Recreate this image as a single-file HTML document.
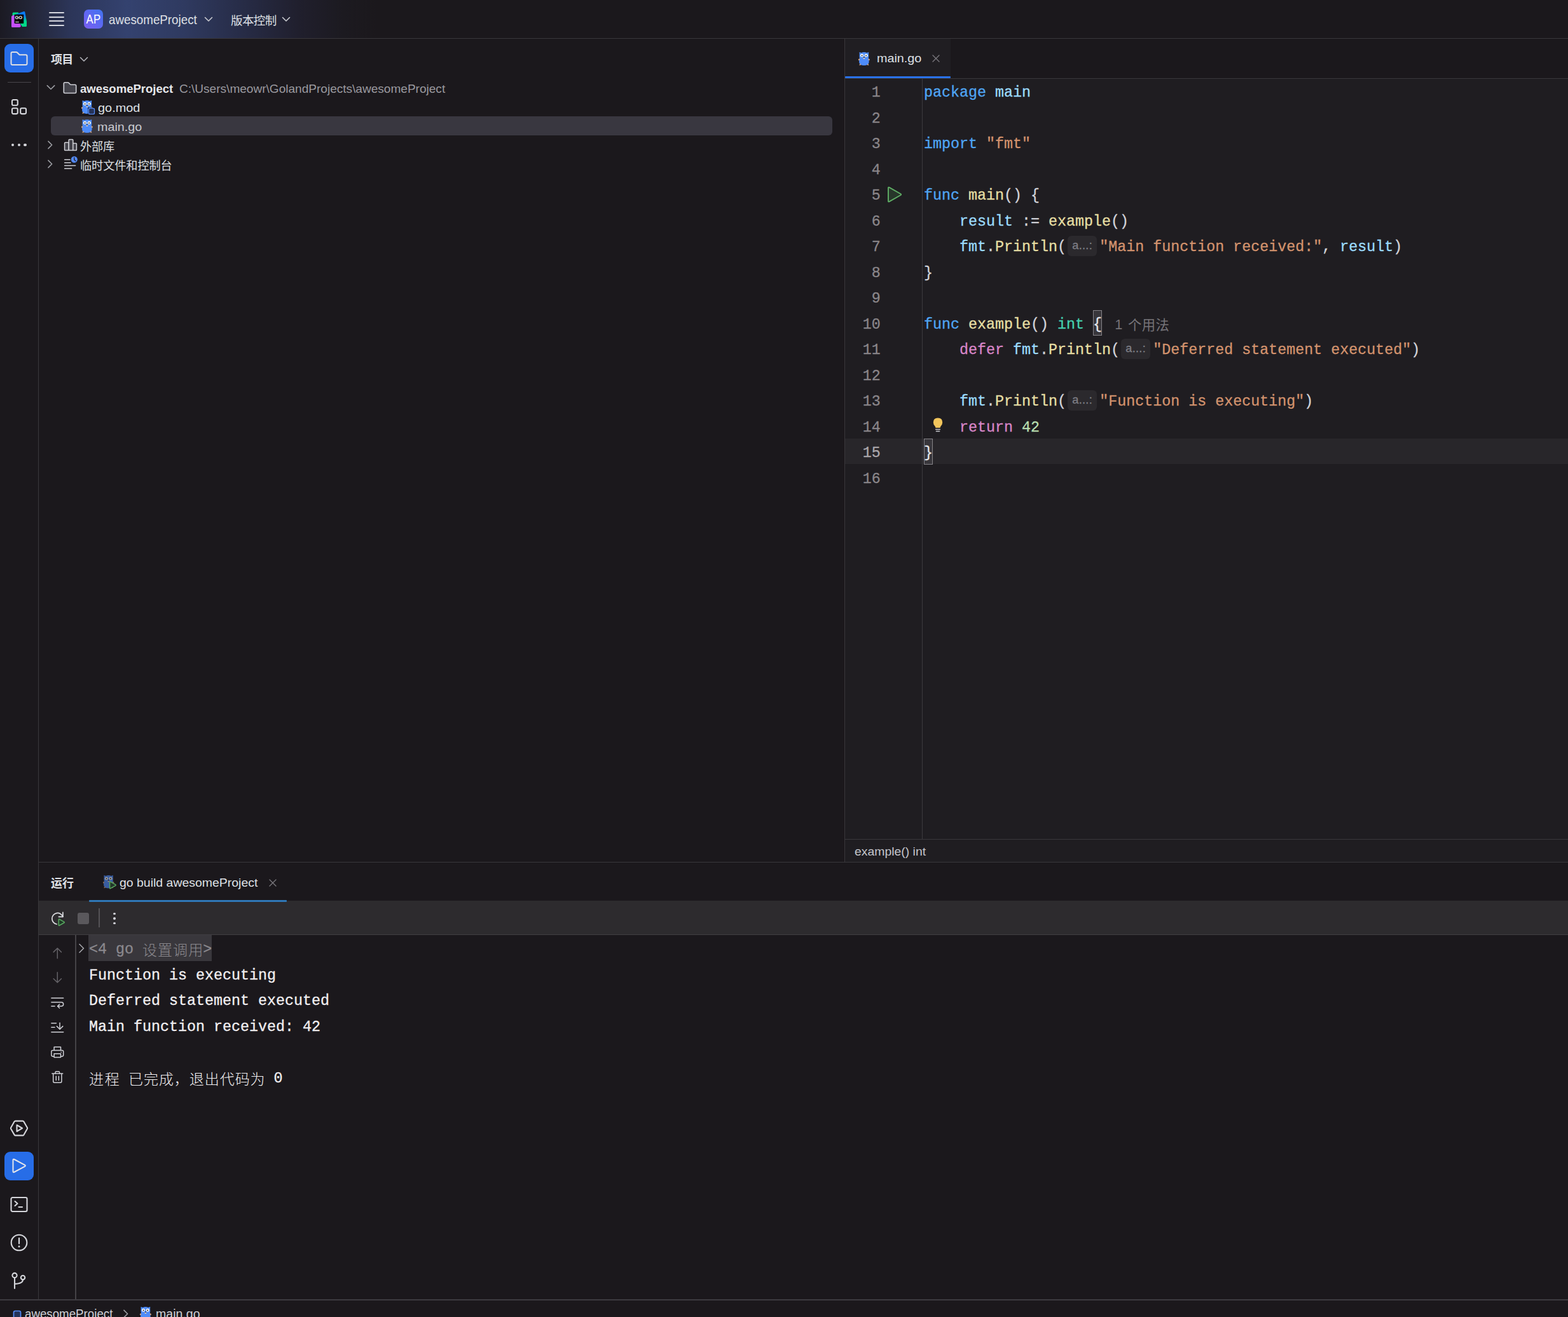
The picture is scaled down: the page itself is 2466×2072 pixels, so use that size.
<!DOCTYPE html>
<html lang="zh-CN"><head><meta charset="utf-8"><title>awesomeProject – main.go</title>
<style>
html,body{margin:0;padding:0;}
body{width:2466px;height:2072px;overflow:hidden;background:#1b181c;position:relative;font-family:"Liberation Sans",sans-serif;}
.b,.a,.t,.cj{position:absolute;}
.t{white-space:pre;font-family:"Liberation Sans",sans-serif;}
.m{-webkit-text-stroke:.3px currentColor;font-family:"Liberation Mono",monospace;font-size:23.33px;line-height:40.5px;height:40.5px;}
.cj{overflow:visible;}
.cj text{font-family:"Liberation Sans","Noto Sans CJK SC",sans-serif;}
.ln{left:1340.7px;width:44px;text-align:right;padding-top:3.1px;letter-spacing:0}
.cl{left:1453px;padding-top:3.1px;color:#d3d4da}
.co{left:140px;padding-top:3.3px;}
.h{display:inline-block;width:52.3px;height:40.5px;vertical-align:top;position:relative;}
.h i{position:absolute;left:2.4px;top:1.5px;width:45.5px;height:32.5px;border-radius:6px;background:#2b292d;color:#7d7e85;font:normal 18.2px/31px "Liberation Sans",sans-serif;text-align:center;letter-spacing:.3px}
.br{background:#38363b;box-shadow:inset 0 0 0 1px #858388;display:inline-block;height:40.5px;margin-top:-3.1px;padding-top:3.1px;box-sizing:border-box;vertical-align:top;color:#e6e6ea}
</style></head>
<body>
<div class="b" style="left:0;top:0;width:2466px;height:60px;background:linear-gradient(90deg,#1b1a23 0px,#232638 50px,#2c3558 110px,#34426f 200px,#2f3a60 290px,#272c47 380px,#201f2d 470px,#1c1a20 540px,#1b181c 595px)"></div>
<div class="b" style="left:0px;top:60px;width:2466px;height:1px;background:#39373b;"></div>
<svg class="a" style="left:17px;top:17px" width="26" height="26" viewBox="0 0 26 26">
<defs><linearGradient id="lg1" x1="0" y1="1" x2="1" y2="0"><stop offset="0" stop-color="#c24dff"/><stop offset=".55" stop-color="#c24dff"/><stop offset="1" stop-color="#7a5cff"/></linearGradient>
<linearGradient id="lg2" x1="0.2" y1="0" x2="0.6" y2="1"><stop offset="0" stop-color="#0a7cfa"/><stop offset=".45" stop-color="#0a7cfa"/><stop offset=".8" stop-color="#00d787"/><stop offset="1" stop-color="#00d787"/></linearGradient></defs>
<path d="M2.6 4.2 Q2.6 2.6 4.2 2.6 L12 2.6 L12 10 L2.6 12 Z" fill="#00d886"/>
<path d="M9 5 L20.5 1 Q22 .6 22.3 2.2 L25 17 L25 23.5 Q25 25 23.5 25 L18 25 L9 12 Z" fill="url(#lg2)"/>
<path d="M1 9.5 Q1 8.3 2 7.8 L8 5.5 L16 24 L15 25.3 Q14.5 26 13.5 26 L2.5 26 Q1 26 1 24.5 Z" fill="#c54fff"/>
<rect x="5.6" y="5.8" width="14.6" height="14.2" rx=".8" fill="#000"/>
<text x="6.6" y="13.2" font-family="Liberation Sans, sans-serif" font-weight="700" font-size="7.6" fill="#fff" letter-spacing="-.2">GO</text>
<rect x="7.2" y="17" width="5.6" height="1.3" fill="#c9c9c9"/>
</svg>
<div class="b" style="left:76.5px;top:19px;width:24px;height:2px;background:#d4d6de;border-radius:1px"></div>
<div class="b" style="left:76.5px;top:25.7px;width:24px;height:2px;background:#d4d6de;border-radius:1px"></div>
<div class="b" style="left:76.5px;top:32.4px;width:24px;height:2px;background:#d4d6de;border-radius:1px"></div>
<div class="b" style="left:76.5px;top:39.1px;width:24px;height:2px;background:#d4d6de;border-radius:1px"></div>
<div class="b" style="left:132px;top:15px;width:30px;height:30px;border-radius:7px;background:linear-gradient(45deg,#7a5ef2 0%,#5f68f2 50%,#4074f0 100%)"></div>
<span class="t" style="left:132px;top:15px;width:30px;text-align:center;font-size:19.5px;line-height:31px;color:#fff;transform:scaleX(.86);letter-spacing:.5px">AP</span>
<span id="f0" class="t" style="top:16.84px;font-size:19.8px;line-height:28px;color:#dfe0e5;left:171.02px;transform:scaleX(0.9487);transform-origin:0 0;">awesomeProject</span>
<svg class="a" style="left:321px;top:25px" width="14" height="11" viewBox="0 0 14 11"><path d="M1.5 2.5 L7 8 L12.5 2.5" fill="none" stroke="#c9cad0" stroke-width="1.6" stroke-linecap="round" stroke-linejoin="round"/></svg>
<svg class="cj" aria-label="版本控制" style="left:362.5px;top:19.50px;width:72.40px;height:24.18px;fill:#dfe0e5;" viewBox="0 -18.60 72.40 24.18"><text x="0" y="0" font-size="18.6" textLength="72.4" lengthAdjust="spacing">版本控制</text></svg>
<svg class="a" style="left:443px;top:25px" width="14" height="11" viewBox="0 0 14 11"><path d="M1.5 2.5 L7 8 L12.5 2.5" fill="none" stroke="#c9cad0" stroke-width="1.6" stroke-linecap="round" stroke-linejoin="round"/></svg>
<div class="b" style="left:60px;top:61px;width:1px;height:1984px;background:#39373b;"></div>
<div class="b" style="left:7px;top:68.8px;width:45.8px;height:45.2px;border-radius:9px;background:#276de7"></div>
<svg class="a" style="left:15px;top:79px" width="30" height="26" viewBox="0 0 30 26"><path d="M2.5 5 Q2.5 3 4.5 3 L10.5 3 Q11.5 3 12.2 3.7 L15.2 6.7 Q15.8 7.3 16.8 7.3 L25.5 7.3 Q27.5 7.3 27.5 9.3 L27.5 21 Q27.5 23 25.5 23 L4.5 23 Q2.5 23 2.5 21 Z" fill="none" stroke="#dddee3" stroke-width="2" stroke-linejoin="round"/></svg>
<div class="b" style="left:12px;top:129px;width:37px;height:1px;background:#48464b;"></div>
<svg class="a" style="left:17px;top:155px" width="26" height="26" viewBox="0 0 26 26"><g fill="none" stroke="#d5d6db" stroke-width="2.1"><rect x="2" y="2" width="8.8" height="8.8" rx="2"/><rect x="2" y="15.3" width="8.8" height="8.8" rx="2"/><rect x="15.2" y="15.3" width="8.8" height="8.8" rx="2"/></g></svg>
<div class="b" style="left:18.0px;top:225.8px;width:4.4px;height:4.4px;border-radius:50%;background:#d5d6db"></div>
<div class="b" style="left:27.7px;top:225.8px;width:4.4px;height:4.4px;border-radius:50%;background:#d5d6db"></div>
<div class="b" style="left:37.4px;top:225.8px;width:4.4px;height:4.4px;border-radius:50%;background:#d5d6db"></div>
<svg class="a" style="left:15px;top:1760px" width="30" height="30" viewBox="0 0 30 30"><g fill="none" stroke="#d5d6db" stroke-width="2.1" stroke-linejoin="round"><path d="M9.3 3.6 L20.7 3.6 Q21.8 3.6 22.4 4.6 L27.8 14 Q28.3 15 27.8 16 L22.4 25.4 Q21.8 26.4 20.7 26.4 L9.3 26.4 Q8.2 26.4 7.6 25.4 L2.2 16 Q1.7 15 2.2 14 L7.6 4.6 Q8.2 3.6 9.3 3.6 Z"/><path d="M11.5 10 L20 15 L11.5 20 Z"/></g></svg>
<div class="b" style="left:7px;top:1812px;width:45.8px;height:45px;border-radius:9px;background:#276de7"></div>
<svg class="a" style="left:15px;top:1819px" width="30" height="30" viewBox="0 0 30 30"><path d="M5.5 6.2 Q5.5 4 7.4 5 L24 13.8 Q25.8 15 24 16.2 L7.4 25 Q5.5 26 5.5 23.8 Z" fill="none" stroke="#e4e5ea" stroke-width="2" stroke-linejoin="round"/></svg>
<svg class="a" style="left:15px;top:1880px" width="30" height="30" viewBox="0 0 30 30"><g fill="none" stroke="#d5d6db" stroke-width="2.1" stroke-linecap="round" stroke-linejoin="round"><rect x="2.5" y="4" width="25" height="22" rx="2.2"/><path d="M8.5 10 L12.5 13.5 L8.5 17"/><path d="M14.5 19 L20 19"/></g></svg>
<svg class="a" style="left:15px;top:1940px" width="30" height="30" viewBox="0 0 30 30"><circle cx="15" cy="15" r="12.3" fill="none" stroke="#d5d6db" stroke-width="2.1"/><path d="M15 8 L15 16.5" stroke="#d5d6db" stroke-width="2.2" stroke-linecap="round"/><circle cx="15" cy="21" r="1.5" fill="#d5d6db"/></svg>
<svg class="a" style="left:15px;top:2000px" width="30" height="30" viewBox="0 0 30 30"><g fill="none" stroke="#d5d6db" stroke-width="2.1" stroke-linecap="round"><circle cx="8" cy="6.5" r="3.6"/><circle cx="21" cy="10" r="3.2"/><path d="M8 10.2 L8 27"/><path d="M21 13.3 Q21 19.5 8 20"/></g></svg>
<svg class="cj" aria-label="项目" style="left:80px;top:82.30px;width:35.20px;height:23.40px;fill:#dfe0e5;" viewBox="0 -18.00 35.20 23.40"><text x="0" y="0" font-size="18" font-weight="700" textLength="35.2" lengthAdjust="spacing">项目</text></svg>
<svg class="a" style="left:125px;top:88px" width="14" height="11" viewBox="0 0 14 11"><path d="M1.5 2.5 L7 8 L12.5 2.5" fill="none" stroke="#b4b5bb" stroke-width="1.5" stroke-linecap="round" stroke-linejoin="round"/></svg>
<svg class="a" style="left:71.5px;top:131.5px" width="16" height="12" viewBox="0 0 16 12"><path d="M2.3 2.6 L8 8.2 L13.7 2.6" fill="none" stroke="#9d9ea4" stroke-width="1.6" stroke-linecap="round" stroke-linejoin="round"/></svg>
<svg class="a" style="left:98px;top:127px" width="24" height="22" viewBox="0 0 24 22"><path d="M2.3 4.5 Q2.3 2.8 4 2.8 L8.6 2.8 Q9.5 2.8 10.1 3.4 L12.4 5.7 Q13 6.3 13.9 6.3 L20 6.3 Q21.7 6.3 21.7 8 L21.7 17.8 Q21.7 19.5 20 19.5 L4 19.5 Q2.3 19.5 2.3 17.8 Z" fill="#43424a" stroke="#cfd0d6" stroke-width="1.6" stroke-linejoin="round"/></svg>
<span id="f1" class="t" style="top:127.16px;font-size:18.6px;line-height:26px;color:#e6e7ea;left:125.8px;font-weight:700;transform:scaleX(0.9966);transform-origin:0 0;">awesomeProject</span>
<span id="f2" class="t" style="top:127.16px;font-size:18.6px;line-height:26px;color:#9a999f;left:282.0px;transform:scaleX(1.0245);transform-origin:0 0;">C:\Users\meowr\GolandProjects\awesomeProject</span>
<svg class="a" style="left:127.2px;top:157.2px;opacity:1" width="19.95" height="22.80" viewBox="0 0 21 24">
<path d="M2.6 1 L5.9 2.1 Q10.4 -.2 14.9 2.1 L18.2 1 L18 4.7 Q18.5 8 17.8 11 Q19.4 16.4 17.9 20 Q16.2 23.2 10.4 23.2 Q4.6 23.2 2.9 20 Q1.4 16.4 3 11 Q2.3 8 2.8 4.7 Z" fill="#4e8cf9"/>
<circle cx="6.9" cy="6.6" r="2.65" fill="#fff"/><circle cx="13.9" cy="6.6" r="2.65" fill="#fff"/>
<circle cx="7" cy="6.8" r="1.1" fill="#1c2230"/><circle cx="13.8" cy="6.8" r="1.1" fill="#1c2230"/>
<ellipse cx="10.4" cy="11.2" rx="1.5" ry="1.1" fill="#efd3b6"/><ellipse cx="10.4" cy="9.7" rx="1.05" ry=".85" fill="#231c22"/>
<path d="M.9 12.6 L3.1 11.9 L3.2 14.3 L1.4 14.9 Z" fill="#d8a884"/><path d="M19.9 12.6 L17.7 11.9 L17.6 14.3 L19.4 14.9 Z" fill="#d8a884"/>
<path d="M3 21 L5.2 20.4 L4.8 22.6 L2.6 22.8 Z" fill="#d8a884"/><path d="M17.8 21 L15.6 20.4 L16 22.6 L18.2 22.8 Z" fill="#d8a884"/>
</svg>
<svg class="a" style="left:137.8px;top:168.8px" width="12" height="12" viewBox="0 0 14 14"><rect x="1.6" y="1.6" width="10.8" height="10.8" rx="2.6" fill="#25335a" stroke="#548af7" stroke-width="1.7"/><rect x="0" y="0" width="14" height="14" rx="3.5" fill="none" stroke="#1b181c" stroke-width="1.2"/></svg>
<span id="f3" class="t" style="top:157.16px;font-size:18.6px;line-height:26px;color:#dfe0e5;left:153.69px;transform:scaleX(1.0707);transform-origin:0 0;">go.mod</span>
<div class="b" style="left:79.5px;top:183px;width:1229.5px;height:30px;border-radius:6px;background:#393740"></div>
<svg class="a" style="left:127.2px;top:187.2px;opacity:1" width="19.95" height="22.80" viewBox="0 0 21 24">
<path d="M2.6 1 L5.9 2.1 Q10.4 -.2 14.9 2.1 L18.2 1 L18 4.7 Q18.5 8 17.8 11 Q19.4 16.4 17.9 20 Q16.2 23.2 10.4 23.2 Q4.6 23.2 2.9 20 Q1.4 16.4 3 11 Q2.3 8 2.8 4.7 Z" fill="#4e8cf9"/>
<circle cx="6.9" cy="6.6" r="2.65" fill="#fff"/><circle cx="13.9" cy="6.6" r="2.65" fill="#fff"/>
<circle cx="7" cy="6.8" r="1.1" fill="#1c2230"/><circle cx="13.8" cy="6.8" r="1.1" fill="#1c2230"/>
<ellipse cx="10.4" cy="11.2" rx="1.5" ry="1.1" fill="#efd3b6"/><ellipse cx="10.4" cy="9.7" rx="1.05" ry=".85" fill="#231c22"/>
<path d="M.9 12.6 L3.1 11.9 L3.2 14.3 L1.4 14.9 Z" fill="#d8a884"/><path d="M19.9 12.6 L17.7 11.9 L17.6 14.3 L19.4 14.9 Z" fill="#d8a884"/>
<path d="M3 21 L5.2 20.4 L4.8 22.6 L2.6 22.8 Z" fill="#d8a884"/><path d="M17.8 21 L15.6 20.4 L16 22.6 L18.2 22.8 Z" fill="#d8a884"/>
</svg>
<span id="f4" class="t" style="top:187.16px;font-size:18.6px;line-height:26px;color:#c9cad0;left:152.97px;transform:scaleX(1.0615);transform-origin:0 0;">main.go</span>
<svg class="a" style="left:72.5px;top:219.5px" width="12" height="16" viewBox="0 0 12 16"><path d="M3 2.4 L8.6 8 L3 13.6" fill="none" stroke="#9d9ea4" stroke-width="1.6" stroke-linecap="round" stroke-linejoin="round"/></svg>
<svg class="a" style="left:99px;top:217px" width="24" height="22" viewBox="0 0 24 22"><g fill="#43424a" stroke="#cfd0d6" stroke-width="1.5" stroke-linejoin="round"><rect x="2.6" y="7.2" width="6.6" height="12.4" rx=".8"/><rect x="15.2" y="8.4" width="6.2" height="11.2" rx=".8"/><rect x="9.2" y="2.6" width="6.6" height="17" rx=".8"/></g></svg>
<svg class="cj" aria-label="外部库" style="left:126px;top:218.60px;width:54.30px;height:23.66px;fill:#dfe0e5;" viewBox="0 -18.20 54.30 23.66"><text x="0" y="0" font-size="18.2" textLength="54.3" lengthAdjust="spacing">外部库</text></svg>
<svg class="a" style="left:72.5px;top:249.5px" width="12" height="16" viewBox="0 0 12 16"><path d="M3 2.4 L8.6 8 L3 13.6" fill="none" stroke="#9d9ea4" stroke-width="1.6" stroke-linecap="round" stroke-linejoin="round"/></svg>
<svg class="a" style="left:99px;top:244px" width="26" height="26" viewBox="0 0 26 26"><g stroke="#cfd0d6" stroke-width="1.5" stroke-linecap="round"><path d="M2.6 7.3 L11.2 7.3"/><path d="M2.6 11.9 L12 11.9"/><path d="M2.6 16.6 L19.6 16.6"/><path d="M2.6 21.2 L13.6 21.2"/></g><circle cx="17.8" cy="7" r="5.5" fill="#548af7" stroke="#1b181c" stroke-width="1"/><path d="M17.8 3.8 L17.8 7.2 L19.8 9" fill="none" stroke="#1b181c" stroke-width="1.3" stroke-linecap="round"/></svg>
<svg class="cj" aria-label="临时文件和控制台" style="left:126px;top:248.60px;width:144.80px;height:23.66px;fill:#dfe0e5;" viewBox="0 -18.20 144.80 23.66"><text x="0" y="0" font-size="18.2" textLength="144.8" lengthAdjust="spacing">临时文件和控制台</text></svg>
<div class="b" style="left:1328px;top:61px;width:1px;height:1296px;background:#39373b;"></div>
<div class="b" style="left:1329px;top:61px;width:1137px;height:1295px;background:#1f1d21;"></div>
<div class="b" style="left:1329px;top:61px;width:1137px;height:62px;background:#1b181c;"></div>
<div class="b" style="left:1329px;top:61px;width:166px;height:59px;background:#201e22;"></div>
<div class="b" style="left:1329px;top:123px;width:1137px;height:1px;background:#39373b;"></div>
<div class="b" style="left:1329px;top:119.7px;width:166px;height:3.5px;background:#2a72ea;border-radius:1px"></div>
<svg class="a" style="left:1349.2px;top:80.9px;opacity:1" width="19.95" height="22.80" viewBox="0 0 21 24">
<path d="M2.6 1 L5.9 2.1 Q10.4 -.2 14.9 2.1 L18.2 1 L18 4.7 Q18.5 8 17.8 11 Q19.4 16.4 17.9 20 Q16.2 23.2 10.4 23.2 Q4.6 23.2 2.9 20 Q1.4 16.4 3 11 Q2.3 8 2.8 4.7 Z" fill="#4e8cf9"/>
<circle cx="6.9" cy="6.6" r="2.65" fill="#fff"/><circle cx="13.9" cy="6.6" r="2.65" fill="#fff"/>
<circle cx="7" cy="6.8" r="1.1" fill="#1c2230"/><circle cx="13.8" cy="6.8" r="1.1" fill="#1c2230"/>
<ellipse cx="10.4" cy="11.2" rx="1.5" ry="1.1" fill="#efd3b6"/><ellipse cx="10.4" cy="9.7" rx="1.05" ry=".85" fill="#231c22"/>
<path d="M.9 12.6 L3.1 11.9 L3.2 14.3 L1.4 14.9 Z" fill="#d8a884"/><path d="M19.9 12.6 L17.7 11.9 L17.6 14.3 L19.4 14.9 Z" fill="#d8a884"/>
<path d="M3 21 L5.2 20.4 L4.8 22.6 L2.6 22.8 Z" fill="#d8a884"/><path d="M17.8 21 L15.6 20.4 L16 22.6 L18.2 22.8 Z" fill="#d8a884"/>
</svg>
<span id="f5" class="t" style="top:79.19px;font-size:18.8px;line-height:26px;color:#dfe0e5;left:1378.98px;transform:scaleX(1.0531);transform-origin:0 0;">main.go</span>
<svg class="a" style="left:1465px;top:85px" width="14" height="14" viewBox="0 0 14 14"><path d="M2 2 L12 12 M12 2 L2 12" stroke="#7a787d" stroke-width="1.35" stroke-linecap="round"/></svg>
<div class="b" style="left:1329px;top:689.7px;width:1137px;height:40.5px;background:#28262a;"></div>
<div class="b" style="left:1450px;top:124px;width:1px;height:1196px;background:#3b393d;"></div>
<div class="b" style="left:1329px;top:1320px;width:1137px;height:1px;background:#39373b;"></div>
<span id="f6" class="t" style="top:1327.49px;font-size:18.8px;line-height:26px;color:#c4c5cb;left:1344.38px;transform:scaleX(1.0325);transform-origin:0 0;">example() int</span>
<div class="b" style="left:61px;top:1356px;width:2405px;height:1px;background:#39373b;"></div>
<span class="t m ln" style="top:123.00px;color:#8a868a">1</span>
<span class="t m cl" style="top:123.00px"><span style="color:#4fa6f5">package</span> <span style="color:#9cdcfe">main</span></span>
<span class="t m ln" style="top:163.50px;color:#8a868a">2</span>
<span class="t m ln" style="top:204.00px;color:#8a868a">3</span>
<span class="t m cl" style="top:204.00px"><span style="color:#4fa6f5">import</span> <span style="color:#d3936e">&quot;fmt&quot;</span></span>
<span class="t m ln" style="top:244.50px;color:#8a868a">4</span>
<span class="t m ln" style="top:285.00px;color:#8a868a">5</span>
<span class="t m cl" style="top:285.00px"><span style="color:#4fa6f5">func</span> <span style="color:#e6dfa4">main</span><span style="color:#d3d4da">() {</span></span>
<span class="t m ln" style="top:325.50px;color:#8a868a">6</span>
<span class="t m cl" style="top:325.50px">    <span style="color:#9cdcfe">result</span><span style="color:#d3d4da"> := </span><span style="color:#e6dfa4">example</span><span style="color:#d3d4da">()</span></span>
<span class="t m ln" style="top:366.00px;color:#8a868a">7</span>
<span class="t m cl" style="top:366.00px">    <span style="color:#9cdcfe">fmt</span><span style="color:#d3d4da">.</span><span style="color:#e6dfa4">Println</span><span style="color:#d3d4da">(</span><span class="h"><i>a...:</i></span><span style="color:#d3936e">&quot;Main function received:&quot;</span><span style="color:#d3d4da">, </span><span style="color:#9cdcfe">result</span><span style="color:#d3d4da">)</span></span>
<span class="t m ln" style="top:406.50px;color:#8a868a">8</span>
<span class="t m cl" style="top:406.50px"><span style="color:#d3d4da">}</span></span>
<span class="t m ln" style="top:447.00px;color:#8a868a">9</span>
<span class="t m ln" style="top:487.50px;color:#8a868a">10</span>
<span class="t m cl" style="top:487.50px"><span style="color:#4fa6f5">func</span> <span style="color:#e6dfa4">example</span><span style="color:#d3d4da">() </span><span style="color:#45d1b0">int</span> <span class="br">{</span></span>
<span class="t m ln" style="top:528.00px;color:#8a868a">11</span>
<span class="t m cl" style="top:528.00px">    <span style="color:#d886c8">defer</span> <span style="color:#9cdcfe">fmt</span><span style="color:#d3d4da">.</span><span style="color:#e6dfa4">Println</span><span style="color:#d3d4da">(</span><span class="h"><i>a...:</i></span><span style="color:#d3936e">&quot;Deferred statement executed&quot;</span><span style="color:#d3d4da">)</span></span>
<span class="t m ln" style="top:568.50px;color:#8a868a">12</span>
<span class="t m ln" style="top:609.00px;color:#8a868a">13</span>
<span class="t m cl" style="top:609.00px">    <span style="color:#9cdcfe">fmt</span><span style="color:#d3d4da">.</span><span style="color:#e6dfa4">Println</span><span style="color:#d3d4da">(</span><span class="h"><i>a...:</i></span><span style="color:#d3936e">&quot;Function is executing&quot;</span><span style="color:#d3d4da">)</span></span>
<span class="t m ln" style="top:649.50px;color:#8a868a">14</span>
<span class="t m cl" style="top:649.50px">    <span style="color:#d886c8">return</span> <span style="color:#b9deb0">42</span></span>
<span class="t m ln" style="top:690.00px;color:#aca8ac">15</span>
<span class="t m cl" style="top:690.00px"><span class="br">}</span></span>
<span class="t m ln" style="top:730.50px;color:#8a868a">16</span>
<span class="t" style="top:495.25px;font-size:21.8px;line-height:31px;color:#757378;left:1753.2px;">1</span>
<svg class="cj" aria-label="个用法" style="left:1773.8px;top:498.20px;width:64.80px;height:27.82px;fill:#757378;" viewBox="0 -21.40 64.80 27.82"><text x="0" y="0" font-size="21.4" textLength="64.8" lengthAdjust="spacing">个用法</text></svg>
<svg class="a" style="left:1394px;top:292px" width="26" height="28" viewBox="0 0 26 28"><path d="M3 3.8 Q3 2 4.6 2.9 L22.4 13 Q24 14 22.4 15 L4.6 25.1 Q3 26 3 24.2 Z" fill="#27362a" stroke="#5fad65" stroke-width="1.9" stroke-linejoin="round"/></svg>
<svg class="a" style="left:1466px;top:656px" width="18" height="26" viewBox="0 0 18 26"><path d="M9 1.6 Q16.2 1.6 16.2 8.6 Q16.2 12 13.6 14.4 Q12.8 15.4 12.6 17 L5.4 17 Q5.2 15.4 4.4 14.4 Q1.8 12 1.8 8.6 Q1.8 1.6 9 1.6 Z" fill="#f2c55c"/><path d="M5.6 19.4 L12.4 19.4 M6.4 22.4 L11.6 22.4" stroke="#c9cad0" stroke-width="1.5" stroke-linecap="round"/></svg>
<svg class="cj" aria-label="运行" style="left:80px;top:1378.30px;width:36.00px;height:23.40px;fill:#dfe0e5;" viewBox="0 -18.00 36.00 23.40"><text x="0" y="0" font-size="18" font-weight="700" textLength="36" lengthAdjust="spacing">运行</text></svg>
<svg class="a" style="left:160.6px;top:1376.4px;opacity:0.6" width="19.53" height="22.32" viewBox="0 0 21 24">
<path d="M2.6 1 L5.9 2.1 Q10.4 -.2 14.9 2.1 L18.2 1 L18 4.7 Q18.5 8 17.8 11 Q19.4 16.4 17.9 20 Q16.2 23.2 10.4 23.2 Q4.6 23.2 2.9 20 Q1.4 16.4 3 11 Q2.3 8 2.8 4.7 Z" fill="#4e8cf9"/>
<circle cx="6.9" cy="6.6" r="2.65" fill="#fff"/><circle cx="13.9" cy="6.6" r="2.65" fill="#fff"/>
<circle cx="7" cy="6.8" r="1.1" fill="#1c2230"/><circle cx="13.8" cy="6.8" r="1.1" fill="#1c2230"/>
<ellipse cx="10.4" cy="11.2" rx="1.5" ry="1.1" fill="#efd3b6"/><ellipse cx="10.4" cy="9.7" rx="1.05" ry=".85" fill="#231c22"/>
<path d="M.9 12.6 L3.1 11.9 L3.2 14.3 L1.4 14.9 Z" fill="#d8a884"/><path d="M19.9 12.6 L17.7 11.9 L17.6 14.3 L19.4 14.9 Z" fill="#d8a884"/>
<path d="M3 21 L5.2 20.4 L4.8 22.6 L2.6 22.8 Z" fill="#d8a884"/><path d="M17.8 21 L15.6 20.4 L16 22.6 L18.2 22.8 Z" fill="#d8a884"/>
</svg>
<svg class="a" style="left:170px;top:1385px" width="14" height="15" viewBox="0 0 14 15"><path d="M2.6 3 Q2.6 1.6 3.8 2.3 L11.6 6.7 Q12.8 7.5 11.6 8.3 L3.8 12.7 Q2.6 13.4 2.6 12 Z" fill="#22352a" stroke="#57a55e" stroke-width="1.5" stroke-linejoin="round"/></svg>
<span id="f7" class="t" style="top:1374.85px;font-size:19.2px;line-height:27px;color:#dfe0e5;left:188.0px;transform:scaleX(1.0140);transform-origin:0 0;">go build awesomeProject</span>
<svg class="a" style="left:422px;top:1382px" width="14" height="14" viewBox="0 0 14 14"><path d="M2 2 L12 12 M12 2 L2 12" stroke="#7a787d" stroke-width="1.35" stroke-linecap="round"/></svg>
<div class="b" style="left:61px;top:1417px;width:2405px;height:53px;background:#2d2b2e;"></div>
<div class="b" style="left:61px;top:1470px;width:2405px;height:1px;background:#403e42;"></div>
<div class="b" style="left:139.5px;top:1416px;width:311.5px;height:3.2px;background:#2f78b7;border-radius:1px"></div>
<svg class="a" style="left:78px;top:1432px" width="28" height="28" viewBox="0 0 28 28"><path d="M11.4 22 A8.8 8.8 0 1 1 20.9 10.3" fill="none" stroke="#dcdde1" stroke-width="1.7" stroke-linecap="round"/><path d="M20.9 3.4 L20.9 10.3 L14.4 10.3" fill="none" stroke="#dcdde1" stroke-width="1.7" stroke-linecap="round" stroke-linejoin="round"/><path d="M14.3 14.6 L23.3 19.2 L14.3 24.2 Z" fill="#2d2b2e" stroke="#2d2b2e" stroke-width="4.6" stroke-linejoin="round"/><path d="M14.3 14.9 Q14.3 13.6 15.4 14.2 L22.8 18.4 Q23.9 19.1 22.8 19.8 L15.4 24 Q14.3 24.6 14.3 23.3 Z" fill="#1f3a27" stroke="#57a55e" stroke-width="1.6" stroke-linejoin="round"/></svg>
<div class="b" style="left:122px;top:1435.8px;width:18px;height:18.2px;background:#5a585c;border-radius:3px"></div>
<div class="b" style="left:155px;top:1429px;width:2px;height:30px;background:#545256;"></div>
<div class="b" style="left:178.2px;top:1435.8999999999999px;width:3.4px;height:3.4px;border-radius:50%;background:#cfd0d6"></div>
<div class="b" style="left:178.2px;top:1443.3px;width:3.4px;height:3.4px;border-radius:50%;background:#cfd0d6"></div>
<div class="b" style="left:178.2px;top:1450.8px;width:3.4px;height:3.4px;border-radius:50%;background:#cfd0d6"></div>
<div class="b" style="left:118px;top:1471px;width:2px;height:574px;background:#444246;"></div>
<svg class="a" style="left:78.8px;top:1487.8px" width="22.6" height="22.6" viewBox="0 0 24 24"><path d="M12 21 L12 4 M5.5 10.5 L12 4 L18.5 10.5" fill="none" stroke="#646267" stroke-width="1.6" stroke-linecap="round" stroke-linejoin="round"/></svg>
<svg class="a" style="left:78.8px;top:1526.8px" width="22.6" height="22.6" viewBox="0 0 24 24"><path d="M12 3 L12 20 M5.5 13.5 L12 20 L18.5 13.5" fill="none" stroke="#646267" stroke-width="1.6" stroke-linecap="round" stroke-linejoin="round"/></svg>
<svg class="a" style="left:78.8px;top:1565.8px" width="22.6" height="22.6" viewBox="0 0 24 24"><g fill="none" stroke="#cfd0d6" stroke-width="1.6" stroke-linecap="round" stroke-linejoin="round"><path d="M2 4.5 L22 4.5"/><path d="M2 11.5 L18.5 11.5 Q22 11.5 22 14.8 Q22 18 18.5 18 L12.5 18"/><path d="M15.5 14.8 L12.3 18 L15.5 21.2"/><path d="M2 18 L7.5 18"/></g></svg>
<svg class="a" style="left:78.8px;top:1604.8px" width="22.6" height="22.6" viewBox="0 0 24 24"><g fill="none" stroke="#cfd0d6" stroke-width="1.6" stroke-linecap="round" stroke-linejoin="round"><path d="M2 5 L10 5"/><path d="M2 12 L7.5 12"/><path d="M2 20 L22 20"/><path d="M16 4.6 L16 15"/><path d="M11 10.2 L16 15.2 L21 10.2"/></g></svg>
<svg class="a" style="left:78.8px;top:1643.8px" width="22.6" height="22.6" viewBox="0 0 24 24"><g fill="none" stroke="#cfd0d6" stroke-width="1.6" stroke-linejoin="round"><path d="M6.5 9 L6.5 3.5 L17.5 3.5 L17.5 9"/><rect x="2" y="9" width="20" height="10" rx="2.2"/><rect x="6.5" y="14.5" width="11" height="6.3" fill="#1b181c"/></g><circle cx="18.2" cy="12" r=".9" fill="#cfd0d6"/></svg>
<svg class="a" style="left:78.8px;top:1682.8px" width="22.6" height="22.6" viewBox="0 0 24 24"><g fill="none" stroke="#cfd0d6" stroke-width="1.6" stroke-linecap="round" stroke-linejoin="round"><path d="M3 6.5 L21 6.5"/><path d="M8.5 6.3 L8.5 4.6 Q8.5 3 10.1 3 L13.9 3 Q15.5 3 15.5 4.6 L15.5 6.3"/><path d="M5 6.8 L5 19.5 Q5 21.5 7 21.5 L17 21.5 Q19 21.5 19 19.5 L19 6.8"/><path d="M9.8 11 L9.8 17.5 M14.2 11 L14.2 17.5"/></g></svg>
<div class="b" style="left:139px;top:1471px;width:194px;height:41px;background:#39373c;"></div>
<svg class="a" style="left:122px;top:1483px" width="12" height="18" viewBox="0 0 12 18"><path d="M3 2.5 L9.5 9 L3 15.5" fill="none" stroke="#a5a6ab" stroke-width="1.6" stroke-linecap="round" stroke-linejoin="round"/></svg>
<span class="t m co" style="top:1471.00px;color:#8b898e">&lt;4 go </span>
<svg class="cj" aria-label="设置调用" style="left:224px;top:1480.40px;width:95.20px;height:29.90px;fill:#8b898e;" viewBox="0 -23.00 95.20 29.90"><text x="0" y="0" font-size="23" font-weight="300" textLength="95.2" lengthAdjust="spacing">设置调用</text></svg>
<span class="t m co" style="top:1471.00px;left:319.2px;color:#8b898e">&gt;</span>
<span class="t m co" style="top:1511.50px;color:#f1eff1">Function is executing</span>
<span class="t m co" style="top:1552.00px;color:#f1eff1">Deferred statement executed</span>
<span class="t m co" style="top:1592.50px;color:#f1eff1">Main function received: 42</span>
<svg class="cj" aria-label="进程" style="left:140px;top:1683.00px;width:47.70px;height:29.90px;fill:#f1eff1;" viewBox="0 -23.00 47.70 29.90"><text x="0" y="0" font-size="23" font-weight="300" textLength="47.7" lengthAdjust="spacing">进程</text></svg>
<svg class="cj" aria-label="已完成，退出代码为" style="left:201.7px;top:1683.00px;width:214.65px;height:29.90px;fill:#f1eff1;" viewBox="0 -23.00 214.65 29.90"><text x="0" y="0" font-size="23" font-weight="300" textLength="214.65" lengthAdjust="spacing">已完成，退出代码为</text></svg>
<span class="t m co" style="top:1673.50px;left:430.4px;color:#f1eff1">0</span>
<div class="b" style="left:0px;top:2044px;width:2466px;height:2px;background:#3d3b40;"></div>
<svg class="a" style="left:20px;top:2061px" width="14" height="14" viewBox="0 0 14 14"><rect x="1.5" y="1.5" width="11" height="11" rx="2.4" fill="#25335a" stroke="#548af7" stroke-width="1.7"/></svg>
<span id="f8" class="t" style="top:2054.08px;font-size:19.4px;line-height:27px;color:#d0d1d6;left:39.0px;transform:scaleX(0.9653);transform-origin:0 0;">awesomeProject</span>
<svg class="a" style="left:191.5px;top:2059px" width="12" height="16" viewBox="0 0 12 16"><path d="M3 2.4 L8.6 8 L3 13.6" fill="none" stroke="#9d9ea4" stroke-width="1.6" stroke-linecap="round" stroke-linejoin="round"/></svg>
<svg class="a" style="left:218.6px;top:2055px;opacity:1" width="19.95" height="22.80" viewBox="0 0 21 24">
<path d="M2.6 1 L5.9 2.1 Q10.4 -.2 14.9 2.1 L18.2 1 L18 4.7 Q18.5 8 17.8 11 Q19.4 16.4 17.9 20 Q16.2 23.2 10.4 23.2 Q4.6 23.2 2.9 20 Q1.4 16.4 3 11 Q2.3 8 2.8 4.7 Z" fill="#4e8cf9"/>
<circle cx="6.9" cy="6.6" r="2.65" fill="#fff"/><circle cx="13.9" cy="6.6" r="2.65" fill="#fff"/>
<circle cx="7" cy="6.8" r="1.1" fill="#1c2230"/><circle cx="13.8" cy="6.8" r="1.1" fill="#1c2230"/>
<ellipse cx="10.4" cy="11.2" rx="1.5" ry="1.1" fill="#efd3b6"/><ellipse cx="10.4" cy="9.7" rx="1.05" ry=".85" fill="#231c22"/>
<path d="M.9 12.6 L3.1 11.9 L3.2 14.3 L1.4 14.9 Z" fill="#d8a884"/><path d="M19.9 12.6 L17.7 11.9 L17.6 14.3 L19.4 14.9 Z" fill="#d8a884"/>
<path d="M3 21 L5.2 20.4 L4.8 22.6 L2.6 22.8 Z" fill="#d8a884"/><path d="M17.8 21 L15.6 20.4 L16 22.6 L18.2 22.8 Z" fill="#d8a884"/>
</svg>
<span id="f9" class="t" style="top:2054.08px;font-size:19.4px;line-height:27px;color:#d0d1d6;left:245.19px;transform:scaleX(1.0077);transform-origin:0 0;">main.go</span>
</body></html>
